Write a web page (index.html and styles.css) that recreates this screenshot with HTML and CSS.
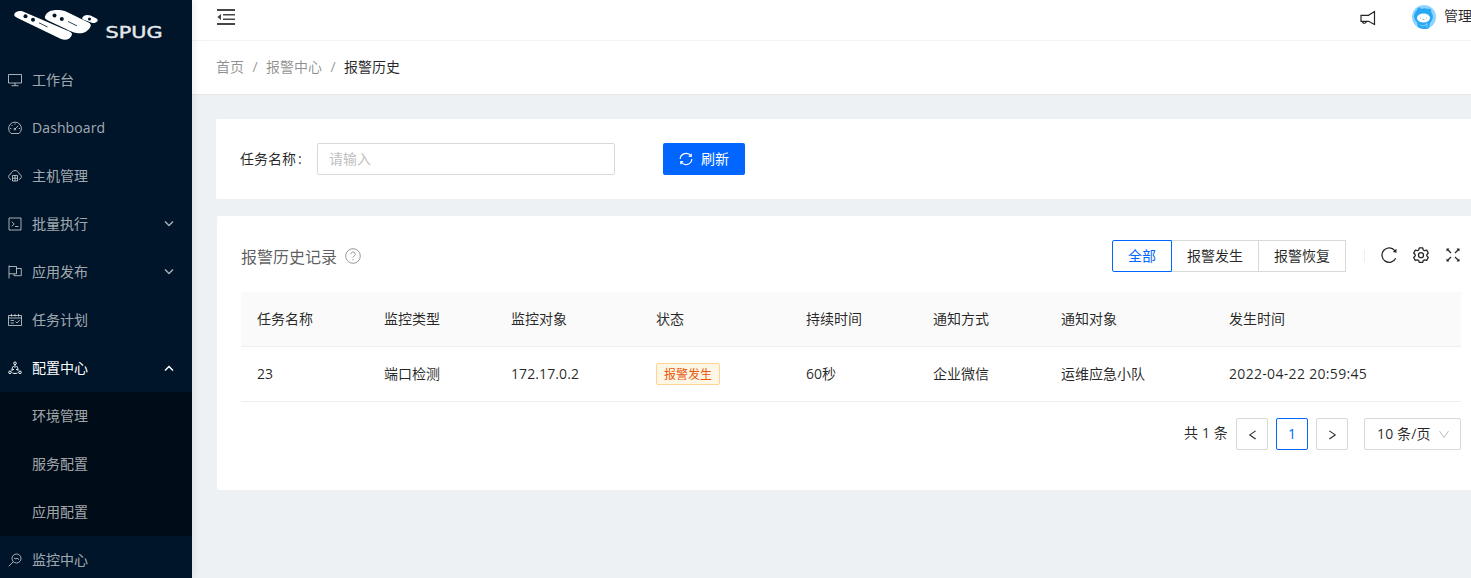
FILE: index.html
```
<!DOCTYPE html>
<html lang="zh-CN">
<head>
<meta charset="utf-8">
<title>报警历史</title>
<link rel="stylesheet" href="styles.css">
</head>
<body>
<div class="app">
  <aside class="sider">
    <svg class="logo" width="192" height="56" viewBox="0 0 192 56">
      <path fill="#fff" d="M14.200 14.500C15 11.500 19 10.300 23 11.500L69.500 31.500C72.500 33 72.500 34.500 71 36.500C68.500 40.500 64.500 40.500 60 38.500L18 18.200C15.500 17 14 16 14.200 14.500Z"/>
      <path fill="#fff" d="M45 16.500C46.500 12 51 10 57 10C61 10 64 10.500 67 12L88 22.200C91 23.700 91.500 25 90 27.500C87 32.500 82 34 76.500 33C73 32.500 70 31 66 29L48 20.500C45.500 19.300 44.500 18.300 45 16.500Z"/>
      <path fill="#fff" d="M82.200 18C83.200 15.200 87 14.200 90.500 15.500L96.500 18.500C99.500 20.500 96.500 23.300 92.500 23L85 20.300C83 19.500 82 19 82.200 18Z"/>
      <g fill="#001529"><circle cx="25.500" cy="16.300" r="2"/><circle cx="33" cy="19.800" r="2"/><circle cx="54.500" cy="15.500" r="2"/><circle cx="61.800" cy="19" r="2"/><circle cx="89.500" cy="19" r="1.500"/></g>
      <path d="M39 22.800l8.500 4.200M68 21.500l9 4.300" stroke="#001529" stroke-width=".8" fill="none"/>
      <text class="logo-text" x="105.500" y="37.500" textLength="57" lengthAdjust="spacingAndGlyphs">SPUG</text>
    </svg>
    <nav class="menu">
      <div class="item"><svg class="ic" viewBox="0 0 14 14"><path d="M.5 1.500h13v8.500H.5zM7 10v2.500M3.500 12.700h7"/></svg><span>工作台</span></div>
      <div class="item"><svg class="ic" viewBox="0 0 14 14"><path d="M3 12.500A6.400 6.400 0 1 1 11 12.500ZM7 2.300v1.300M2 7.500h1.300M10.700 7.500H12M3.500 4l.9.900M6.800 8.200l3.500-3.500"/><circle cx="6.800" cy="8.200" r=".8"/></svg><span class="latin">Dashboard</span></div>
      <div class="item"><svg class="ic" viewBox="0 0 14 14"><path d="M3 10.500C-.2 9.500 0 5.700 2.600 5.200C4 .3 10 .3 11.400 5.200C14 5.700 14.200 9.500 11 10.500M4.500 6.500h5v5.500h-5zM4.500 9.200h5M7 6.500V12"/></svg><span>主机管理</span></div>
      <div class="item"><svg class="ic" viewBox="0 0 14 14"><path d="M1 1h12v12H1zM3.700 4.700L6.200 7 3.700 9.300M7 9.500h3.500"/></svg><span>批量执行</span><svg class="arrow" viewBox="0 0 10 10"><path d="M1 2.500l4 4 4-4"/></svg></div>
      <div class="item"><svg class="ic" viewBox="0 0 14 14"><path d="M1 .5v13M1 1.500h7.500v7.300H1M8.500 3.500h4.800v7.200H6V8.800"/></svg><span>应用发布</span><svg class="arrow" viewBox="0 0 10 10"><path d="M1 2.500l4 4 4-4"/></svg></div>
      <div class="item"><svg class="ic" viewBox="0 0 14 14"><path d="M.5 2.500h13v10H.5zM.5 5h13M3.500 1v2.500M7 1v2.500M10.500 1v2.500M2.500 7.500h3.500M2.500 10h3.500M7.500 8.500l1.500 1.500 2.700-3"/></svg><span>任务计划</span></div>
      <div class="item open"><svg class="ic" viewBox="0 0 14 14"><circle cx="7" cy="2.300" r="1.300"/><circle cx="2" cy="11.300" r="1.300"/><circle cx="12" cy="11.300" r="1.300"/><path d="M7 3.600v3.200M5.500 5C4.500 6 4 7.500 3.800 9.300L6 8.300M8.500 5c1 1 1.500 2.500 1.700 4.300L8 8.300M4.500 12c1.500.6 3.500.6 5 0"/></svg><span>配置中心</span><svg class="arrow" viewBox="0 0 10 10"><path d="M1 7.500l4-4 4 4"/></svg></div>
      <div class="sub">
        <div class="item">环境管理</div>
        <div class="item">服务配置</div>
        <div class="item">应用配置</div>
      </div>
      <div class="item"><svg class="ic" viewBox="0 0 14 14"><circle cx="8.500" cy="5.500" r="4.500"/><path d="M5.300 8.700L.8 13.300M6 5l2 1 1-.8 2 1.300"/></svg><span>监控中心</span></div>
    </nav>
  </aside>
  <div class="main">
    <header class="top">
      <svg class="fold" viewBox="0 0 18 16"><path stroke-width="2" d="M0 1h18M0 15h18"/><path stroke-width="1.500" d="M6 5.700h12M6 10.300h12"/><path class="solid" d="M4 5v6L.3 8z"/></svg>
      <span class="grow"></span>
      <svg class="notice" viewBox="0 0 16 16"><path stroke-width="1.200" d="M14.500 1.500v13L8.500 11.300H1V5.300h7.500zM2.500 11.300c0 2.600 3.500 2.600 4 0"/></svg>
      <svg class="avatar" viewBox="0 0 24 24"><circle cx="12" cy="12" r="12" fill="#8fd4ff"/><path fill="#28a8f4" d="M5 5c1-3 3-3 4-1 2-1 5-1 7 0 2-1 4 0 3 3 3 3 2 9-1 11l-1 5c-3 2-8 1-11-1l-1-5C1 14 1 9 5 5z"/><ellipse cx="11.500" cy="13" rx="6.500" ry="4.500" fill="#fff"/><path d="M8.500 12.500v1M14.500 12.500v1M10.500 14.500h2" stroke="#8fbcd2"/><path d="M8 19.500c2 2 4 2 7-1v4" stroke="#8fd4ff" fill="none"/></svg>
      <span class="user">管理</span>
    </header>
    <div class="crumbs"><span>首页</span><i>/</i><span>报警中心</span><i>/</i><b>报警历史</b></div>
    <section class="card search">
      <label>任务名称<em>:</em></label>
      <div class="input">请输入</div>
      <div class="refresh"><svg viewBox="0 0 14 14"><path d="M1.200 7A5.900 5.900 0 0 1 12 4M12.800 7A5.900 5.900 0 0 1 2 10M12.200 1.700V4.300H9.800M1.800 12.300V9.700H4.200"/></svg><span>刷新</span></div>
    </section>
    <section class="card list">
      <div class="bar">
        <h1>报警历史记录</h1>
        <svg class="help" viewBox="0 0 16 16"><circle cx="8" cy="8" r="7.300"/><path d="M5.800 6.400c0-3 4.500-3 4.500 0C10.300 8 8 7.900 8 9.600M8 10.900v1.300"/></svg>
        <span class="grow"></span>
        <div class="tabs"><div class="tab on">全部</div><div class="tab">报警发生</div><div class="tab">报警恢复</div></div>
        <span class="split"></span>
        <svg class="tool" viewBox="0 0 16 16"><path d="M14.700 11.200A7.200 7.200 0 1 1 13.800 3.600"/><path class="solid" d="M15.500 1.800v4l-3.700-.8z"/></svg>
        <svg class="tool" viewBox="0 0 16 16"><path stroke-linejoin="round" d="M6.300.8h3.400l.6 2.200 1.200.7 2.200-.6 1.600 2.900-1.500 1.700v1.200l1.500 1.600-1.600 2.900-2.200-.6-1.200.7-.6 1.900H6.300l-.6-1.900-1.200-.7-2.200.6L.7 10.500l1.500-1.600V7.700L.7 6l1.600-2.900 2.200.6L5.700 3z"/><circle cx="8" cy="8.200" r="2.500"/></svg>
        <svg class="tool" viewBox="0 0 16 16"><path stroke-width="1.300" d="M2.500 2.500l3.500 3.500M13.500 2.500L10 6M2.500 13.500L6 10M13.500 13.500L10 10"/><path class="solid" d="M1.500 1.500h3L1.500 4.500zM14.500 1.500h-3l3 3zM1.500 14.500h3l-3-3zM14.500 14.500h-3l3-3z"/></svg>
      </div>
      <div class="row head"><span>任务名称</span><span>监控类型</span><span>监控对象</span><span>状态</span><span>持续时间</span><span>通知方式</span><span>通知对象</span><span>发生时间</span></div>
      <div class="row"><span>23</span><span>端口检测</span><span class="latin">172.17.0.2</span><span><mark>报警发生</mark></span><span>60秒</span><span>企业微信</span><span>运维应急小队</span><span class="time">2022-04-22 20:59:45</span></div>
      <div class="pager">
        <span class="total">共 1 条</span>
        <div class="page"><svg viewBox="0 0 10 12"><path d="M8.500 2.500L2 7l6.500 4.500"/></svg></div>
        <div class="page on">1</div>
        <div class="page"><svg viewBox="0 0 10 12"><path d="M1.500 2.500L8 7l-6.500 4.500"/></svg></div>
        <div class="size"><span>10 条/页</span><svg viewBox="0 0 12 12"><path d="M1.500 3l4.500 6.500L10.500 3"/></svg></div>
      </div>
    </section>
  </div>
</div>
</body>
</html>
```
FILE: styles.css
```
* { box-sizing: border-box; }
body { margin: 0; overflow: hidden; font: 14px/22px "Open Sans", "Noto Sans CJK SC", sans-serif; color: rgba(0,0,0,.85); }
svg { flex: none; fill: none; stroke: currentColor; }
.solid { fill: currentColor; stroke: none; }
.app { display: flex; width: 1471px; height: 578px; overflow: hidden; }
.sider { flex: none; width: 192px; background: #001529; color: rgba(255,255,255,.65); box-shadow: 2px 0 8px rgba(0,21,41,.08); z-index: 1; }
.logo { display: block; stroke: none; }
.logo-text { font: 15px "DejaVu Sans", sans-serif; fill: #e4e8ea; stroke: #e4e8ea; stroke-width: .4px; }
.item { display: flex; align-items: center; height: 48px; padding: 0 18px 0 8px; }
.item .ic { width: 14px; height: 14px; margin-right: 10px; }
.latin { letter-spacing: .1px; }
.time { letter-spacing: .32px; }
.arrow { width: 10px; height: 10px; margin-left: auto; stroke-width: 1.500; }
.open { color: #fff; }
.sub { background: #000c17; }
.sub .item { padding-left: 32px; }
.main { flex: none; width: 1279px; background: #edf1f4; }
.grow { flex: 1; }
.top { display: flex; align-items: center; height: 41px; padding: 0 0 7px 25px; background: #fff; border-bottom: 1px solid #f3f3f3; }
.fold { width: 18px; height: 16px; opacity: .85; }
.notice { width: 16px; height: 16px; margin: 2px 36px 0 0; }
.avatar { width: 24px; height: 24px; stroke: none; margin-right: 8px; }
.user { width: 27px; white-space: nowrap; margin-top: -1px; }
.crumbs { display: flex; height: 54px; padding: 15px 24px; background: #fff; border-bottom: 1px solid #e5e7e9; color: rgba(0,0,0,.45); }
.crumbs i { width: 22px; text-align: center; font-style: normal; }
.crumbs b { font-weight: 400; color: rgba(0,0,0,.85); }
.card { background: #fff; border-radius: 2px 0 0 2px; }
.search { display: flex; align-items: center; height: 80px; margin: 24px 0 0 24px; padding: 0 24px; }
.search label { width: 77px; }
.search em { margin-left: 2px; font-style: normal; }
.input { width: 298px; height: 32px; padding: 4px 11px; border: 1px solid #d9d9d9; border-radius: 2px; color: #bfbfbf; }
.refresh { display: flex; align-items: center; gap: 8px; width: 82px; height: 32px; margin-left: 48px; padding: 0 16px; background: #06f; border-radius: 2px; color: #fff; }
.refresh svg { width: 14px; height: 14px; stroke-width: 1.200; }
.list { height: 274px; margin: 17px 0 0 25px; padding: 24px 10px 0 24px; }
.bar { display: flex; align-items: center; height: 32px; margin-bottom: 20px; }
h1 { margin: 2px 8px 0 0; font-size: 16px; font-weight: 400; color: rgba(0,0,0,.65); }
.help { width: 16px; height: 16px; color: #999; }
.tabs { display: flex; }
.tab { height: 32px; width: 87px; border: 1px solid #d9d9d9; border-left: 0; line-height: 30px; text-align: center; }
.tab.on { width: 60px; border: 1px solid #06f; border-radius: 2px 0 0 2px; color: #06f; }
.split { width: 1px; height: 12px; margin: 0 0 0 18px; background: #eee; }
.tool { width: 16px; height: 16px; margin: -2px 0 0 16px; stroke-width: 1.300; }
.row { display: grid; grid-template-columns: 127px 127px 145px 150px 127px 128px 168px 1fr; align-items: center; height: 55px; padding-left: 16px; border-bottom: 1px solid #eee; }
.row.head { background: #fafafa; }
mark { display: block; width: 64px; height: 22px; border: 1px solid #ffd591; border-radius: 2px; background: #fff7e6; color: #e8590c; font-size: 12px; line-height: 21px; text-align: center; }
.pager { display: flex; align-items: center; justify-content: flex-end; gap: 8px; margin-top: 16px; }
.total { margin-top: -2px; letter-spacing: .15px; }
.page { display: flex; align-items: center; justify-content: center; width: 32px; height: 32px; border: 1px solid #d9d9d9; border-radius: 2px; }
.page svg { width: 9px; height: 12px; stroke-width: 1.200; }
.page.on { border-color: #06f; color: #06f; }
.size { display: flex; align-items: center; justify-content: space-between; width: 97px; height: 32px; margin-left: 8px; padding: 0 10px 0 12px; border: 1px solid #d9d9d9; border-radius: 2px; letter-spacing: .15px; }
.size svg { width: 12px; height: 12px; color: #bfbfbf; }
```
